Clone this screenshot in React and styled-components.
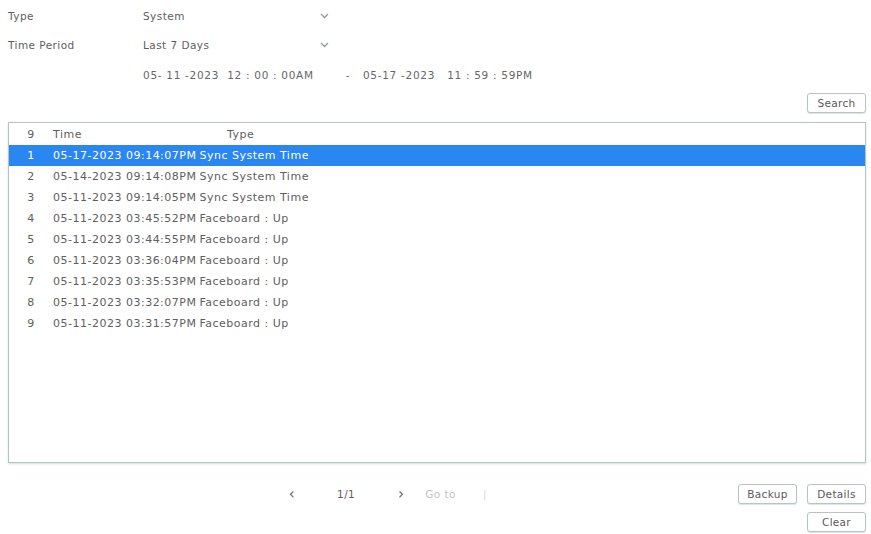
import React from "react";
import styled, { createGlobalStyle } from "styled-components";

const GlobalStyle = createGlobalStyle`
  html, body {
    margin: 0;
    padding: 0;
    background: #ffffff;
  }
  body {
    font-family: "DejaVu Sans", "Liberation Sans", sans-serif;
    color: #5b5b5b;
  }
`;

const logs = [
  ["05-17-2023 09:14:07PM", "Sync System Time"],
  ["05-14-2023 09:14:08PM", "Sync System Time"],
  ["05-11-2023 09:14:05PM", "Sync System Time"],
  ["05-11-2023 03:45:52PM", "Faceboard : Up"],
  ["05-11-2023 03:44:55PM", "Faceboard : Up"],
  ["05-11-2023 03:36:04PM", "Faceboard : Up"],
  ["05-11-2023 03:35:53PM", "Faceboard : Up"],
  ["05-11-2023 03:32:07PM", "Faceboard : Up"],
  ["05-11-2023 03:31:57PM", "Faceboard : Up"],
];

const Chevron = () => (
  <svg width="9" height="6" viewBox="0 0 9 6">
    <path d="M1 1l3.5 3.5L8 1" fill="none" stroke="#8f9a9a" strokeWidth="1.3" />
  </svg>
);

export default function App() {
  return (
    <Page>
      <GlobalStyle />
      <Filters>
        <FieldRow>
          <Label>Type</Label>
          <Select>
            System
            <Chevron />
          </Select>
        </FieldRow>
        <FieldRow>
          <Label>Time Period</Label>
          <Select>
            Last 7 Days
            <Chevron />
          </Select>
        </FieldRow>
        <FieldRow>
          <Label />
          <DateRange>
            <DateText>05- 11 -2023  12 : 00 : 00AM</DateText>
            <Dash>-</Dash>
            <DateText>05-17 -2023   11 : 59 : 59PM</DateText>
          </DateRange>
        </FieldRow>
      </Filters>
      <SearchBar>
        <Button>Search</Button>
      </SearchBar>
      <Table>
        <Row>
          <Index>9</Index>
          <Time>Time</Time>
          <HeadType>Type</HeadType>
        </Row>
        {logs.map(([time, type], i) => (
          <Row key={i} $selected={i === 0}>
            <Index>{i + 1}</Index>
            <Time>{time}</Time>
            <span>{type}</span>
          </Row>
        ))}
      </Table>
      <Footer>
        <Pager>
          <PageArrow>‹</PageArrow>
          <PageNum>1/1</PageNum>
          <PageArrow>›</PageArrow>
          <GoTo>Go to</GoTo>
          <GoInput>|</GoInput>
        </Pager>
        <Actions>
          <ButtonRow>
            <Button>Backup</Button>
            <Button>Details</Button>
          </ButtonRow>
          <ButtonRow>
            <Button>Clear</Button>
          </ButtonRow>
        </Actions>
      </Footer>
    </Page>
  );
}

const Page = styled.div`
  width: 871px;
  height: 534px;
  padding: 1px 5px 0 8px;
  box-sizing: border-box;
  font-size: 10.5px;
  letter-spacing: 0.45px;
`;

const Filters = styled.div`
  display: flex;
  flex-direction: column;
`;

const FieldRow = styled.div`
  display: flex;
  align-items: center;
  height: 29.5px;
`;

const Label = styled.div`
  width: 135px;
  color: #5e5e5e;
`;

const Select = styled.div`
  width: 186px;
  display: flex;
  align-items: center;
  justify-content: space-between;
  color: #5e5e5e;
`;

const DateRange = styled.div`
  display: flex;
  align-items: center;
  color: #666666;
`;

const DateText = styled.span`
  white-space: pre;
  letter-spacing: 0.7px;
`;

const Dash = styled.span`
  margin: 0 13px 0 32px;
`;

const SearchBar = styled.div`
  display: flex;
  justify-content: flex-end;
  margin-top: 3px;
  margin-bottom: 9px;
`;

const Button = styled.button`
  font-family: inherit;
  font-size: 10.5px;
  letter-spacing: 0.3px;
  color: #5a5a5a;
  background: #ffffff;
  border: 1px solid #b9c3c3;
  border-radius: 3px;
  height: 20px;
  min-width: 59px;
  padding: 0 5px;
  box-shadow: 0 1px 1px rgba(150, 180, 175, 0.35);
  cursor: pointer;
`;

const Table = styled.div`
  height: 341px;
  padding-top: 1px;
  border: 1px solid #b4c4c1;
  box-shadow: 0 1px 2px rgba(120, 170, 160, 0.35);
  box-sizing: border-box;
`;

const Row = styled.div`
  display: flex;
  align-items: center;
  height: 21.1px;
  font-size: 11px;
  letter-spacing: 0.5px;
  color: ${(p) => (p.$selected ? "#ffffff" : "#5e5e5e")};
  background: ${(p) => (p.$selected ? "#2a86f0" : "transparent")};
`;

const Index = styled.span`
  width: 44px;
  text-align: center;
`;

const Time = styled.span`
  white-space: nowrap;
  margin-right: 3px;
`;

const HeadType = styled.span`
  margin-left: 142px;
`;

const Footer = styled.div`
  display: flex;
  justify-content: space-between;
  padding-top: 21px;
`;

const Pager = styled.div`
  display: flex;
  align-items: center;
  height: 20px;
  margin-left: 279px;
  color: #5e5e5e;
`;

const PageArrow = styled.span`
  font-size: 15px;
  width: 10px;
  text-align: center;
`;

const PageNum = styled.span`
  margin: 0 41px 0 40px;
`;

const GoTo = styled.span`
  margin-left: 19px;
  color: #c4c4c4;
`;

const GoInput = styled.span`
  margin-left: 27px;
  color: #d6d6d6;
`;

const Actions = styled.div`
  display: flex;
  flex-direction: column;
  align-items: flex-end;
  gap: 8px;
`;

const ButtonRow = styled.div`
  display: flex;
  gap: 10px;
`;
